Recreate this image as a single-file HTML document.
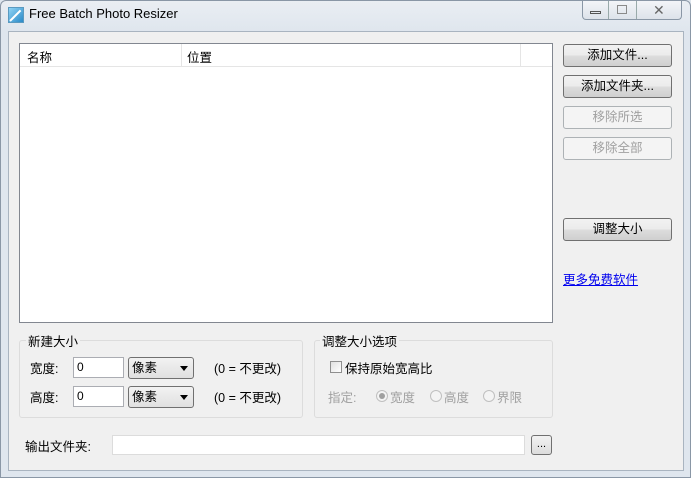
<!DOCTYPE html>
<html><head><meta charset="utf-8"><style>
*{box-sizing:border-box;margin:0;padding:0}
body{width:691px;height:478px;background:#dfe6ee;font-family:"Liberation Sans","Noto Sans CJK SC",sans-serif;font-size:12px;color:#000;position:relative;overflow:hidden}
.frame{position:absolute;left:0;top:0;width:691px;height:478px;border:1px solid #8a97a6;border-radius:6px 6px 0 0;background:linear-gradient(#eaeef3,#dfe6ee 30px)}
.client{position:absolute;left:8px;top:31px;width:676px;height:440px;background:#f0f0f0;border:1px solid #a9b4c0}
.a{position:absolute}
.btn{position:absolute;left:563px;width:109px;height:23px;border:1px solid #707070;border-radius:3px;background:linear-gradient(#f2f2f2 0,#ebebeb 50%,#dddddd 51%,#cfcfcf);text-align:center;line-height:21px;font-size:12.5px}
.dis{color:#a0a0a0;border-color:#adb2b5;background:#f4f4f4}
.grp{position:absolute;border:1px solid #dcdcdc;border-radius:3px}
.inp{position:absolute;background:#fff;border:1px solid #abadb3;height:21px;padding-left:3px;line-height:19px}
.sel{position:absolute;width:66px;height:22px;border:1px solid #707070;border-radius:3px;background:linear-gradient(#f2f2f2,#e0e0e0);padding-left:3px;line-height:20px;font-size:12.5px}
.sel:after{content:"";position:absolute;right:5px;top:8px;border:4px solid transparent;border-top:5px solid #000}
.t{position:absolute;font-size:12.5px}
.g{color:#a0a0a0}
.rad{position:absolute;width:12px;height:12px;border:1px solid #c0c0c0;border-radius:50%;background:#f4f4f4}
</style></head><body>
<div class="frame"></div>
<div class="a" style="left:8px;top:7px;width:16px;height:16px;background:linear-gradient(135deg,#8fd3f4,#2a8ac8);border:1px solid #5a9ac0"></div>
<div class="a" style="left:10px;top:20px;width:15px;height:2px;background:#fff;transform:rotate(-45deg);transform-origin:left"></div>
<div class="t" style="left:29px;top:6px;font-size:13px">Free Batch Photo Resizer</div>
<div class="a" style="left:582px;top:1px;width:100px;height:19px;border:1px solid #8a97a6;border-top:none;border-radius:0 0 4px 4px;background:linear-gradient(#f3f5f8,#dde3ea)"></div>
<div class="a" style="left:608px;top:1px;width:1px;height:18px;background:#9aa"></div>
<div class="a" style="left:636px;top:1px;width:1px;height:18px;background:#9aa"></div>
<div class="a" style="left:590px;top:11px;width:11px;height:3px;border:1px solid #555"></div>
<div class="a" style="left:617px;top:5px;width:10px;height:9px;border:1px solid #8a8a8a"></div>
<div class="t" style="left:653px;top:2px;color:#666;font-size:14px">✕</div>
<div class="client"></div>
<div class="a" style="left:19px;top:43px;width:534px;height:280px;background:#fff;border:1px solid #828790"></div>
<div class="a" style="left:20px;top:44px;width:532px;height:23px;border-bottom:1px solid #e5e5e5;background:#fff"></div>
<div class="a" style="left:181px;top:44px;width:1px;height:23px;background:#e5e5e5"></div>
<div class="a" style="left:520px;top:44px;width:1px;height:23px;background:#e5e5e5"></div>
<div class="t" style="left:27px;top:47px">名称</div>
<div class="t" style="left:187px;top:47px">位置</div>
<div class="btn" style="top:44px">添加文件...</div>
<div class="btn" style="top:75px">添加文件夹...</div>
<div class="btn dis" style="top:106px">移除所选</div>
<div class="btn dis" style="top:137px">移除全部</div>
<div class="btn" style="top:218px">调整大小</div>
<div class="t" style="left:563px;top:269px;color:#0000ee;text-decoration:underline">更多免费软件</div>
<div class="grp" style="left:19px;top:340px;width:284px;height:78px"></div>
<div class="t" style="left:26px;top:331px;background:#f0f0f0;padding:0 2px">新建大小</div>
<div class="t" style="left:30px;top:358px">宽度:</div>
<div class="inp" style="left:73px;top:357px;width:51px">0</div>
<div class="sel" style="left:128px;top:357px">像素</div>
<div class="t" style="left:214px;top:358px">(0 = 不更改)</div>
<div class="t" style="left:30px;top:387px">高度:</div>
<div class="inp" style="left:73px;top:386px;width:51px">0</div>
<div class="sel" style="left:128px;top:386px">像素</div>
<div class="t" style="left:214px;top:387px">(0 = 不更改)</div>
<div class="grp" style="left:314px;top:340px;width:239px;height:78px"></div>
<div class="t" style="left:320px;top:331px;background:#f0f0f0;padding:0 2px">调整大小选项</div>
<div class="a" style="left:330px;top:361px;width:12px;height:12px;border:1px solid #8f8f8f;background:linear-gradient(135deg,#e0e0e0,#fff)"></div>
<div class="t" style="left:345px;top:358px">保持原始宽高比</div>
<div class="t g" style="left:328px;top:387px">指定:</div>
<div class="rad" style="left:376px;top:390px"></div><div class="a" style="left:379px;top:393px;width:6px;height:6px;border-radius:50%;background:#a0a0a0"></div>
<div class="t g" style="left:390px;top:387px">宽度</div>
<div class="rad" style="left:430px;top:390px"></div>
<div class="t g" style="left:444px;top:387px">高度</div>
<div class="rad" style="left:483px;top:390px"></div>
<div class="t g" style="left:497px;top:387px">界限</div>
<div class="t" style="left:25px;top:436px">输出文件夹:</div>
<div class="inp" style="left:112px;top:435px;width:413px;height:20px;border-color:#dcdcdc"></div>
<div class="a" style="left:531px;top:435px;width:21px;height:20px;border:1px solid #707070;border-radius:3px;background:linear-gradient(#f2f2f2,#dcdcdc);text-align:center;line-height:16px;font-size:11px">...</div>
</body></html>
